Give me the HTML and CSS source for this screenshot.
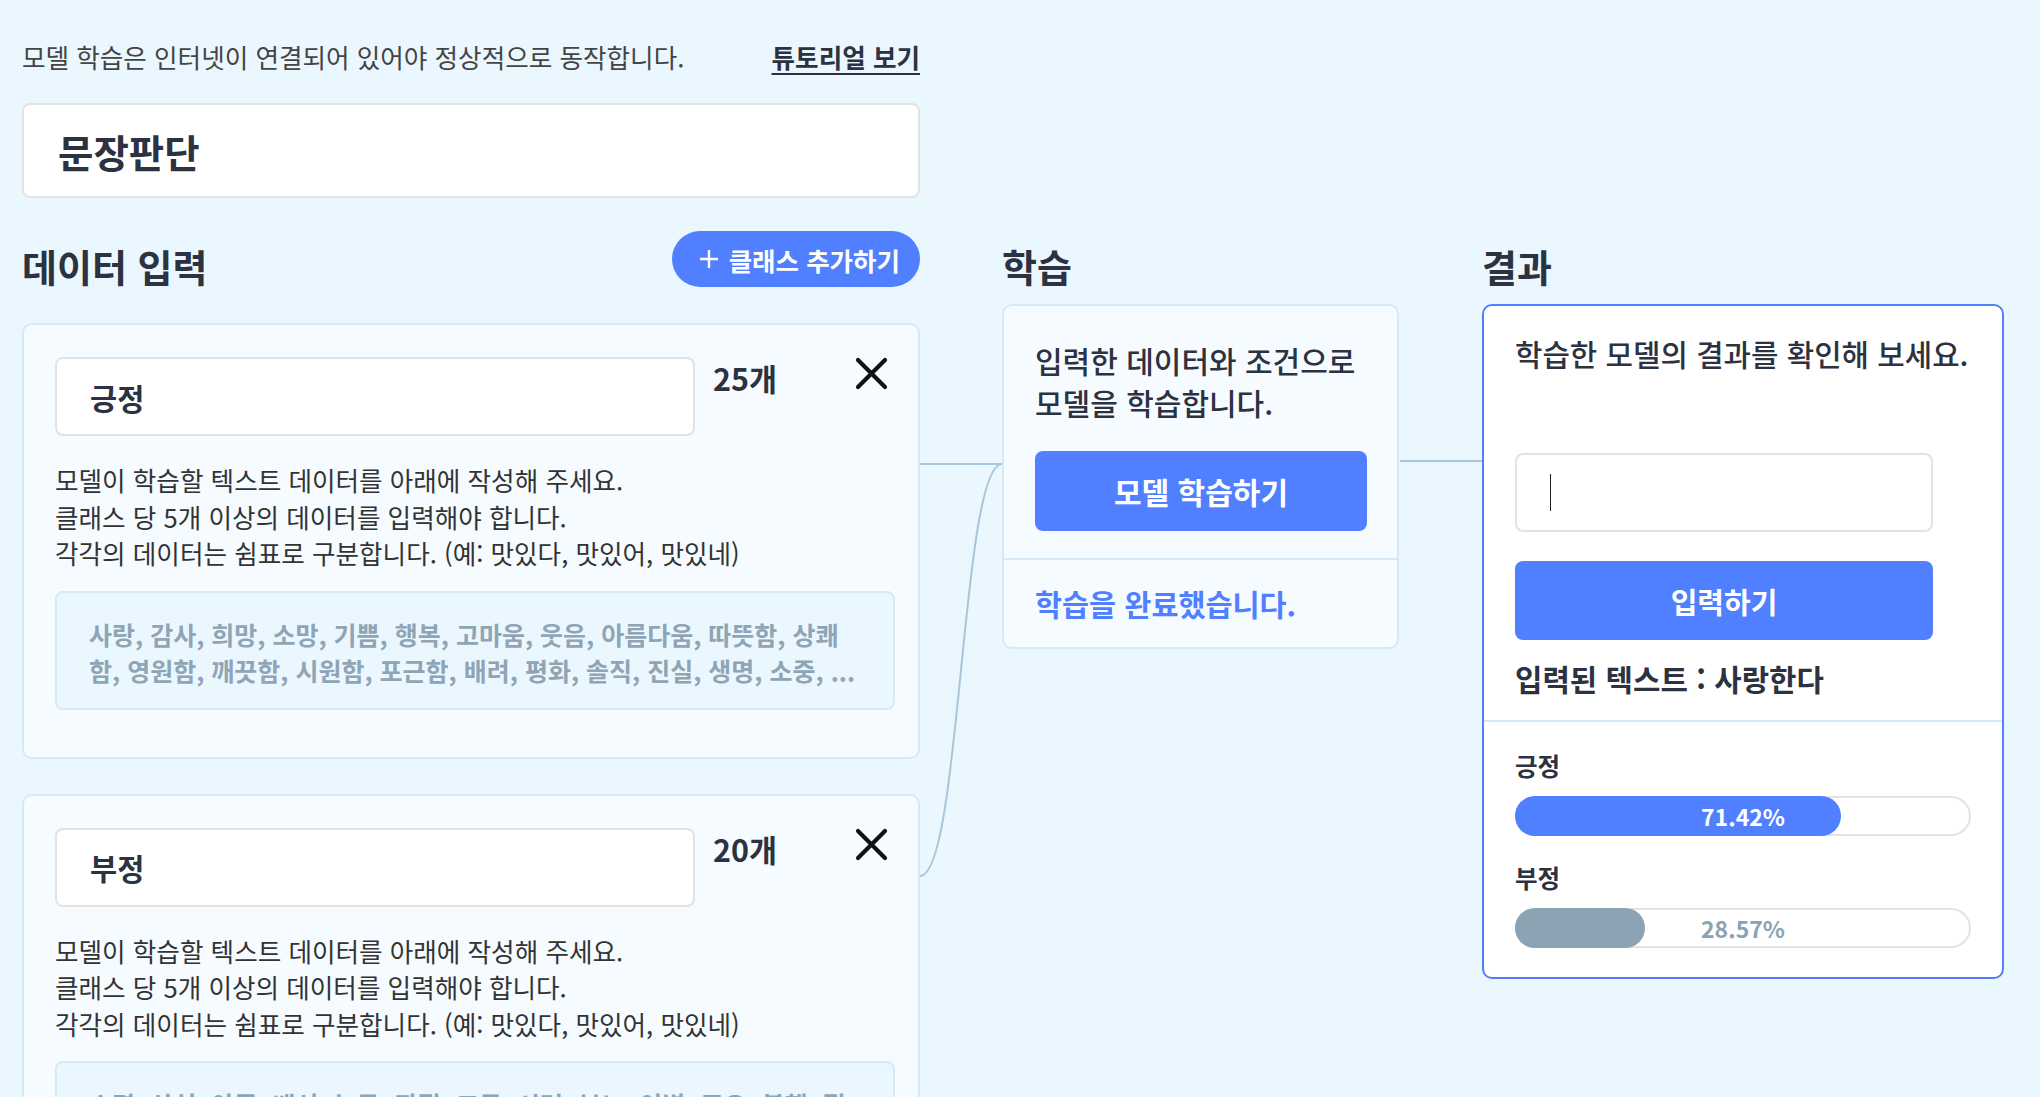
FILE: index.html
```html
<!DOCTYPE html>
<html lang="ko">
<head>
    <meta charset="UTF-8">
    <meta name="viewport" content="width=device-width, initial-scale=1.0">
    <title>텍스트 분류 모델 만들기</title>
    <link rel="stylesheet" href="styles.css">
</head>
<body>
    <div class="page">
        <!-- connectors between the class cards, the training card and the result card -->
        <svg class="links" width="2040" height="1400" viewBox="0 0 2040 1400">
            <path d="M920 464 H1002" />
            <path d="M920 876 C961 876, 961 464, 1002 464" />
            <path d="M1400 461 H1482" />
        </svg>

        <div class="notice">
            <p class="notice-text">모델 학습은 인터넷이 연결되어 있어야 정상적으로 동작합니다.</p>
            <a class="tutorial-link" href="#">튜토리얼 보기</a>
        </div>

        <div class="project-name">문장판단</div>

        <div class="columns">
            <section class="col col-data">
                <div class="col-head">
                    <h2>데이터 입력</h2>
                    <button class="add-class">
                        <svg width="20" height="20" viewBox="0 0 20 20"><path d="M10 1 V19 M1 10 H19" /></svg>
                        클래스 추가하기
                    </button>
                </div>

                <div class="class-card">
                    <div class="class-head">
                        <div class="class-name">긍정</div>
                        <span class="class-count">25개</span>
                        <button class="remove-btn" aria-label="삭제">
                            <svg width="33" height="33" viewBox="0 0 33 33"><path d="M3 3 L30 30 M30 3 L3 30" /></svg>
                        </button>
                    </div>
                    <p class="class-help">
                        모델이 학습할 텍스트 데이터를 아래에 작성해 주세요.<br>
                        클래스 당 5개 이상의 데이터를 입력해야 합니다.<br>
                        각각의 데이터는 쉼표로 구분합니다. (예: 맛있다, 맛있어, 맛있네)
                    </p>
                    <div class="class-data">사랑, 감사, 희망, 소망, 기쁨, 행복, 고마움, 웃음, 아름다움, 따뜻함, 상쾌함, 영원함, 깨끗함, 시원함, 포근함, 배려, 평화, 솔직, 진실, 생명, 소중, ...</div>
                </div>

                <div class="class-card">
                    <div class="class-head">
                        <div class="class-name">부정</div>
                        <span class="class-count">20개</span>
                        <button class="remove-btn" aria-label="삭제">
                            <svg width="33" height="33" viewBox="0 0 33 33"><path d="M3 3 L30 30 M30 3 L3 30" /></svg>
                        </button>
                    </div>
                    <p class="class-help">
                        모델이 학습할 텍스트 데이터를 아래에 작성해 주세요.<br>
                        클래스 당 5개 이상의 데이터를 입력해야 합니다.<br>
                        각각의 데이터는 쉼표로 구분합니다. (예: 맛있다, 맛있어, 맛있네)
                    </p>
                    <div class="class-data">소멸, 상처, 아픔, 배신, 눈물, 좌절, 고통, 시련, 분노, 이별, 증오, 불행, 절망, 슬픔, 외로움, 걱정, 후회, 불안, 실망, 미움, ...</div>
                </div>
            </section>

            <section class="col col-train">
                <div class="col-head">
                    <h2>학습</h2>
                </div>
                <div class="train-card">
                    <div class="train-main">
                        <p class="train-desc">입력한 데이터와 조건으로 모델을 학습합니다.</p>
                        <button class="primary-btn">모델 학습하기</button>
                    </div>
                    <div class="train-status">학습을 완료했습니다.</div>
                </div>
            </section>

            <section class="col col-result">
                <div class="col-head">
                    <h2>결과</h2>
                </div>
                <div class="result-card">
                    <div class="result-main">
                        <p class="result-desc">학습한 모델의 결과를 확인해 보세요.</p>
                        <div class="text-input"><span class="caret"></span></div>
                        <button class="primary-btn submit-btn">입력하기</button>
                        <p class="input-result">입력된 텍스트 : 사랑한다</p>
                    </div>
                    <div class="result-bars">
                        <p class="bar-name">긍정</p>
                        <div class="bar">
                            <div class="bar-fill" style="width: 71.42%"></div>
                            <span class="bar-label on-fill">71.42%</span>
                        </div>
                        <p class="bar-name">부정</p>
                        <div class="bar">
                            <div class="bar-fill muted" style="width: 28.57%"></div>
                            <span class="bar-label">28.57%</span>
                        </div>
                    </div>
                </div>
            </section>
        </div>
    </div>
</body>
</html>
```

FILE: styles.css
```css
body {
    margin: 0;
    background-color: #ebf7fe;
    font-family: "Noto Sans CJK KR", "Noto Sans", sans-serif;
    color: #2c3240;
}
.page {
    position: relative;
    padding: 40px 36px 0 22px;
}
.links {
    position: absolute;
    top: 0;
    left: 0;
    pointer-events: none;
}
.links path {
    fill: none;
    stroke: #a9c5da;
    stroke-width: 2;
}

.notice {
    width: 898px;
    display: flex;
    justify-content: space-between;
    align-items: center;
    height: 34px;
}
.notice-text {
    margin: 0;
    font-size: 25.6px;
    line-height: 34px;
    color: #444;
}
.tutorial-link {
    font-size: 25.6px;
    line-height: 34px;
    font-weight: 700;
    color: #2c3240;
    text-decoration: underline;
    text-decoration-thickness: 2px;
    text-underline-offset: 5px;
}

.project-name {
    width: 898px;
    height: 95px;
    box-sizing: border-box;
    margin-top: 29px;
    padding: 0 34px;
    display: flex;
    align-items: center;
    background-color: #fff;
    border: 2px solid #e3e3e3;
    border-radius: 8px;
    font-size: 38.5px;
    font-weight: 700;
}

.columns {
    display: flex;
    gap: 82px;
    margin-top: 33px;
}
.col {
    flex: none;
}
.col-data {
    width: 898px;
}
.col-train {
    width: 397px;
}
.col-result {
    width: 522px;
    margin-left: 1px;
}
.col-head {
    height: 56px;
    display: flex;
    justify-content: space-between;
    align-items: flex-end;
}
.col-head h2 {
    margin: 0;
    font-size: 38px;
    line-height: 42px;
    font-weight: 700;
}

button {
    font-family: inherit;
    cursor: pointer;
    border: none;
}
.add-class {
    height: 56px;
    display: flex;
    align-items: center;
    gap: 10px;
    padding: 0 20px 0 27px;
    border-radius: 28px;
    background-color: #5080ff;
    color: #fff;
    font-size: 25.5px;
    font-weight: 700;
}
.add-class path {
    stroke: #fff;
    stroke-width: 2.4;
}

.class-card {
    margin-top: 36px;
    padding: 32px 23px 47px 31px;
    background-color: #f5fbff;
    border: 2px solid #d6e9f6;
    border-radius: 10px;
}
.class-card + .class-card {
    margin-top: 35px;
}
.class-head {
    display: flex;
    align-items: flex-start;
}
.class-name {
    width: 640px;
    height: 79px;
    box-sizing: border-box;
    padding-left: 33px;
    display: flex;
    align-items: center;
    background-color: #fff;
    border: 2px solid #e2e2e2;
    border-radius: 8px;
    font-size: 29.5px;
    font-weight: 700;
}
.class-count {
    margin-left: 18px;
    font-size: 30.5px;
    line-height: 42px;
    font-weight: 700;
}
.remove-btn {
    margin-left: auto;
    margin-right: 7px;
    width: 33px;
    height: 33px;
    padding: 0;
    background: none;
}
.remove-btn path {
    stroke: #111;
    stroke-width: 4.2;
    stroke-linecap: round;
}
.class-help {
    margin: 26px 0 0;
    font-size: 25.6px;
    line-height: 36.5px;
    color: #333;
}
.class-data {
    margin-top: 19px;
    padding: 23px 36px 20px 32px;
    background-color: #ebf7fe;
    border: 2px solid #d6e9f6;
    border-radius: 8px;
    font-size: 25px;
    line-height: 36px;
    font-weight: 700;
    color: #8fa5b5;
}

.train-card {
    margin-top: 17px;
    background-color: #f5fbff;
    border: 2px solid #d6e9f6;
    border-radius: 10px;
}
.train-main {
    padding: 33px 30px 27px 31px;
    border-bottom: 2px solid #d6e9f6;
}
.train-desc {
    margin: 0;
    font-size: 30px;
    line-height: 42px;
    font-weight: 500;
}
.primary-btn {
    display: block;
    width: 100%;
    height: 80px;
    margin-top: 28px;
    border-radius: 8px;
    background-color: #5080ff;
    color: #fff;
    font-size: 30px;
    font-weight: 700;
}
.train-status {
    padding: 23px 31px 24px;
    font-size: 29.4px;
    line-height: 40px;
    font-weight: 700;
    color: #5080ff;
}

.result-card {
    margin-top: 17px;
    background-color: #fff;
    border: 2px solid #5080ff;
    border-radius: 10px;
}
.result-main {
    padding: 27px 8px 22px 31px;
    border-bottom: 2px solid #d6e9f6;
}
.result-desc {
    margin: 0;
    font-size: 29.8px;
    line-height: 40px;
    font-weight: 500;
}
.text-input {
    width: 418px;
    height: 79px;
    box-sizing: border-box;
    margin-top: 80px;
    padding-left: 33px;
    display: flex;
    align-items: center;
    border: 2px solid #e2e2e2;
    border-radius: 8px;
}
.caret {
    width: 1px;
    height: 37px;
    background-color: #222;
}
.submit-btn {
    width: 418px;
    height: 79px;
    margin-top: 29px;
    font-size: 29px;
}
.input-result {
    margin: 18px 0 0;
    font-size: 29.8px;
    line-height: 40px;
    font-weight: 700;
}
.result-bars {
    padding: 27px 31px 29px;
}
.bar-name {
    margin: 0;
    font-size: 24.5px;
    line-height: 34px;
    font-weight: 700;
}
.bar + .bar-name {
    margin-top: 25px;
}
.bar {
    display: grid;
    height: 40px;
    margin-top: 13px;
    border-radius: 20px;
    background-color: #fff;
    box-shadow: inset 0 0 0 2px #e3e3e3;
}
.bar-fill {
    grid-area: 1 / 1;
    border-radius: 20px;
    background-color: #5080ff;
}
.bar-fill.muted {
    background-color: #8ba3b2;
}
.bar-label {
    grid-area: 1 / 1;
    text-align: center;
    font-size: 23px;
    line-height: 40px;
    font-weight: 700;
    color: #8ba3b2;
}
.bar-label.on-fill {
    color: #fff;
}
```
